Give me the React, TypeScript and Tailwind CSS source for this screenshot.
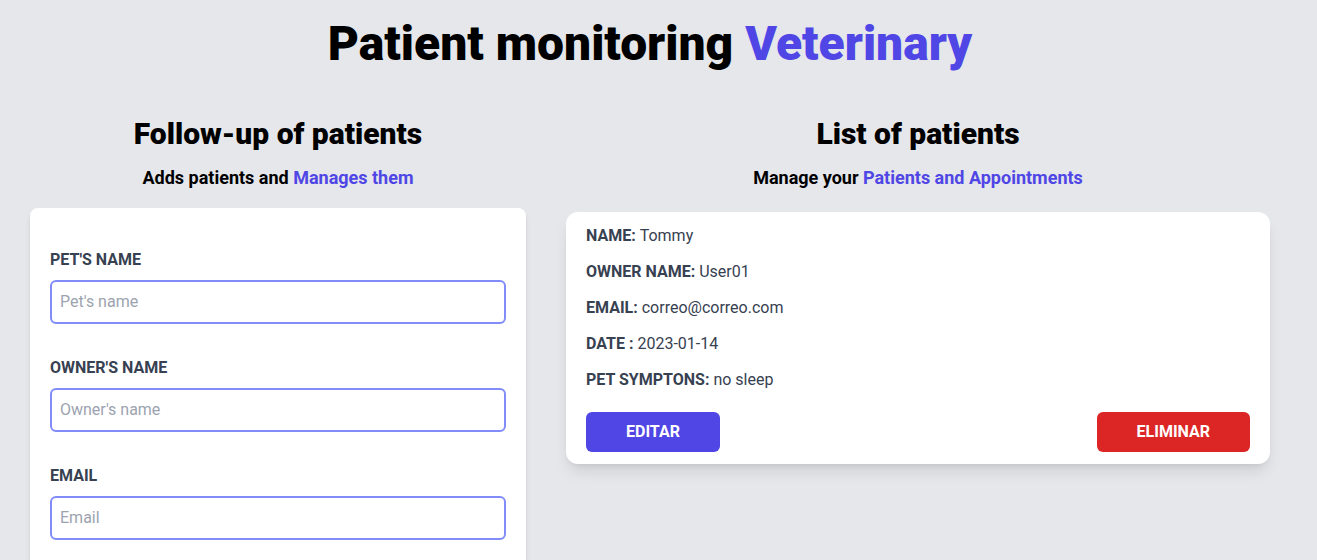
import React from "react";

const Field = ({ label, placeholder, type = "text" }: { label: string; placeholder: string; type?: string }) => (
  <div className="mb-8">
    <label className="block text-[#374151] uppercase font-bold">{label}</label>
    <input
      type={type}
      placeholder={placeholder}
      className="mt-2 block w-full border-2 border-[#818cf8] rounded-md p-2 placeholder-[#9ca3af] outline-none bg-white"
    />
  </div>
);

const Row = ({ label, value }: { label: string; value: string }) => (
  <p className="mb-3 text-[#374151] font-bold">
    {label} <span className="font-normal">{value}</span>
  </p>
);

export default function App() {
  return (
    <div className="h-[560px] w-full overflow-hidden bg-[#e5e7eb]" style={{ fontFamily: "Roboto, 'Noto Sans', sans-serif" }}>
      <div className="w-[1300px]">
        <h1 className="mt-5 text-5xl leading-none font-black text-center text-black">
          Patient monitoring <span className="text-[#4f46e5]">Veterinary</span>
        </h1>
        <div className="mt-12 flex gap-10 px-[30px]">
          <div className="w-[496px] shrink-0">
            <h2 className="text-3xl font-black text-center text-black">Follow-up of patients</h2>
            <p className="mt-3 mb-4 text-lg font-bold text-center text-black">
              Adds patients and <span className="text-[#4f46e5]">Manages them</span>
            </p>
            <form className="bg-white shadow-md rounded-lg pt-10 pb-10 px-5">
              <Field label="Pet's name" placeholder="Pet's name" />
              <Field label="Owner's name" placeholder="Owner's name" />
              <Field label="Email" placeholder="Email" type="email" />
            </form>
          </div>
          <div className="flex-1">
            <h2 className="text-3xl font-black text-center text-black">List of patients</h2>
            <p className="mt-3 mb-5 text-lg font-bold text-center text-black">
              Manage your <span className="text-[#4f46e5]">Patients and Appointments</span>
            </p>
            <div className="bg-white shadow-lg rounded-xl px-5 pt-3 pb-3">
              <Row label="NAME:" value="Tommy" />
              <Row label="OWNER NAME:" value="User01" />
              <Row label="EMAIL:" value="correo@correo.com" />
              <Row label="DATE :" value="2023-01-14" />
              <Row label="PET SYMPTONS:" value="no sleep" />
              <div className="mt-5 flex justify-between">
                <button className="py-2 px-10 bg-[#4f46e5] text-white font-bold uppercase rounded-md">Editar</button>
                <button className="py-2 px-10 bg-[#dc2626] text-white font-bold uppercase rounded-md">Eliminar</button>
              </div>
            </div>
          </div>
        </div>
      </div>
    </div>
  );
}
